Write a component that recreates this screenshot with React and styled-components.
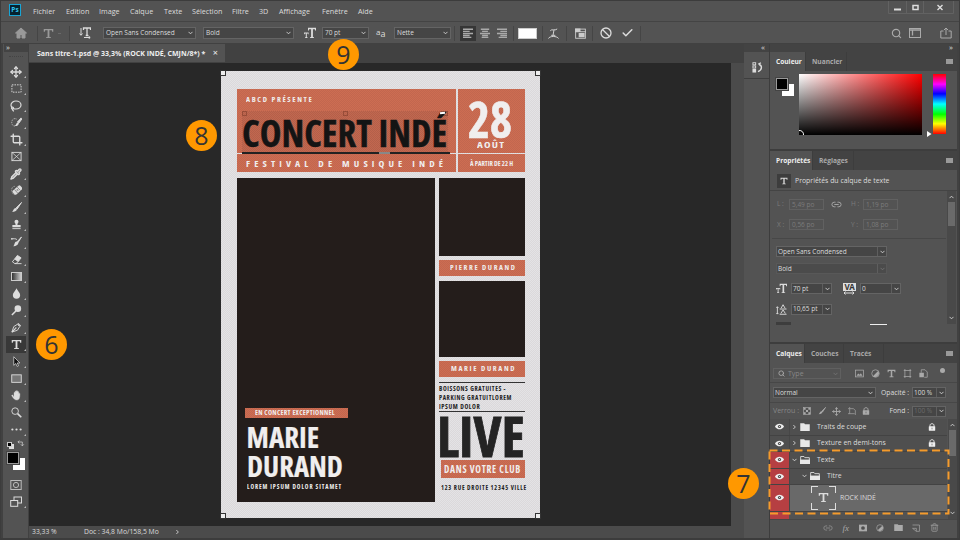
import React, { useLayoutEffect, useRef, useState } from 'react';
import styled, { createGlobalStyle } from 'styled-components';
import { Pipette, Move, Lasso, Crop, Search, Link2, Ban, Check, Trash2 } from 'lucide-react';

const tools = [
    'move', 'marquee', 'lasso', 'quick', 'crop', 'frame', 'pipette', 'heal', 'brush', 'stamp', 'history',
    'eraser', 'gradient', 'drop', 'dodge', 'pen', 'type', 'arrow', 'rect', 'hand', 'zoom', 'dots',
];

const menus = ['Fichier', 'Edition', 'Image', 'Calque', 'Texte', 'Sélection', 'Filtre', '3D', 'Affichage', 'Fenêtre', 'Aide'];
const menuWidths = [33, 33, 31, 34, 28, 40, 27, 20, 43, 36, 30];

const glyphs = {
    home: <path d="M6 1 0.5 6H2v5h3V7.500h2V11h3V6h1.500z" fill="currentColor" />,
    marquee: <rect x="1" y="2" width="10" height="8" strokeDasharray="1.700 1.100" />,
    quick: <><path d="M6 2.200C3 .8.8 3 .8 6s2.200 4.500 4.500 3.500" strokeDasharray="1 .8" strokeWidth=".8" /><path d="m11 1-4 4.500 1.500 1.300L12 2z" fill="currentColor" /><path d="M7.300 6 8.500 7C8 9.500 6.500 10 4 9.800 6 8.500 5.500 6.300 7.300 6z" fill="currentColor" stroke="none" /></>,
    frame: <><rect x="1" y="1.500" width="10" height="9" /><path d="m1 1.500 10 9m0-9-10 9" strokeWidth=".8" /></>,
    heal: <><g transform="rotate(-42 7 5.500)"><rect x="1.500" y="2.700" width="11" height="5.600" rx="1.500" fill="currentColor" stroke="none" /><path d="M5 3v5M9 3v5M6.500 4.500v2M7.500 4.500v2" stroke="#555" strokeWidth=".6" /></g><path d="M4 1.500C1.500 1.500.5 4 .8 6s1.200 4 3.200 4.500" strokeDasharray="1 .8" strokeWidth=".7" /></>,
    brush: <><path d="m11.500.5-6 6 1.200 1.200z" fill="currentColor" strokeWidth="1" /><path d="M5 6.500 6.500 8C6 10 4 11 1 11c1.500-.8 1.500-4 4-4.500z" fill="currentColor" stroke="none" /></>,
    stamp: <><path d="M3.800 3a2.200 2.200 0 1 1 4.400 0c0 1.300-1.200 1.500-1.200 3.500h3.500V9h-9V6.500H5C5 4.500 3.800 4.300 3.800 3z" fill="currentColor" stroke="none" /><path d="M1.500 10.500h9" /></>,
    history: <><path d="m11.500 1-5 5.500 1 1z" fill="currentColor" strokeWidth="1" /><path d="M6 6 8 8C7.500 10 5 11.500 2.500 11.200 4 10.200 3.500 6.500 6 6z" fill="currentColor" stroke="none" /><path d="M0 3h4M1 2.200v2M4 3c1 0 2 .3 2.500 1" /></>,
    eraser: <><path d="m7 1.500 4 2.700-3 4-4-2.700z" fill="currentColor" /><path d="m4 5.500-2.500 3L4 10.300h1.500L8 8.200M4 10.500h7.500" /></>,
    drop: <path d="M6 .3C5 3 2 5 2 7.700a4 4 0 0 0 8 0C10 5 7 3 6 .3z" fill="currentColor" stroke="none" />,
    dodge: <><circle cx="7.500" cy="4" r="3.600" fill="currentColor" stroke="none" /><path d="M5.300 6.500 1 11" strokeWidth="1.700" /></>,
    pen: <><path d="M1 11 3 5l4-2.500L9.500 5 7 9z" /><path d="m1 11 4-4M7.500 1.500 10.500 4.500" strokeWidth="1.400" /><circle cx="5.300" cy="6.500" r=".8" fill="currentColor" stroke="none" /></>,
    type: <path d="M.8 1h10.400v3.200H10L9.600 2.500H7v7.200l1.700.4v.9H3.300v-.9L5 9.700V2.500H2.400L2 4.200H.8z" fill="currentColor" stroke="none" />,
    arrow: <path d="M3 .8v9.400l2.200-2 1.500 3.200 1.500-.7L6.800 7.600h2.900z" fill="#111" strokeWidth=".8" />,
    rect: <rect x=".8" y="2" width="10.400" height="8.200" fill="#777" />,
    hand: <path d="M3.300 7.800V3.200c0-.9 1.200-.9 1.200 0V1.800c0-.9 1.300-.9 1.300 0v-.5c0-.9 1.300-.9 1.300 0v.8c.2-.7 1.300-.6 1.300.3v1.400c.3-.6 1.400-.4 1.300.4C9.700 7 9.500 11 6.500 11 4 11 3 9.500.8 6.300c-.3-.8.8-1.200 1.300-.5z" fill="currentColor" stroke="currentColor" strokeWidth=".4" />,
    zoom: <><circle cx="4.500" cy="4.500" r="3.600" /><path d="m7.200 7.200 4 4" strokeWidth="1.800" /></>,
    dots: <g fill="currentColor" stroke="none"><circle cx="1.500" cy="6" r="1.200" /><circle cx="6" cy="6" r="1.200" /><circle cx="10.500" cy="6" r="1.200" /></g>,
    orient: <><path d="M2 1v7M.5 6.500 2 8.300l1.500-1.800M5 10.500h6M9.500 9l1.700 1.500-1.700 1.500" /><path d="M4.500 3V1h7v2M8 1v7.500M6.700 8.500h2.600" strokeWidth="1.300" /></>,
    size: <g fill="currentColor" stroke="none"><path d="M4 .8h8v2.800h-.9l-.2-1.400H8.900V10l1.100.3v.7H6v-.7l1.100-.3V2.200H5.100l-.2 1.400H4z" /><path d="M0 5.500h4.600v1.700H4l-.2-.8H2.800V10l.7.300v.7H1.100v-.7l.7-.3V6.400H.8l-.2.800H0z" /></g>,
    lead: <><path d="M1.500 3v8M.4 4.200 1.500 3l1.100 1.200M.4 9.800 1.500 11l1.100-1.200M4 5.500h7.500M4 11.200h7.500" /><path d="M5.500 4.800 7.700.8 10 4.800M5.300 10.300 7.700 6.500l2.500 3.800" /></>,
    left: <path d="M0 1.500h12M0 4h8M0 6.500h12M0 9h8M0 11.300h10" strokeWidth="1.700" />,
    center: <path d="M1 1.500h10M2.500 4h7M0 6.500h12M2.500 9h7M2 11.300h8" strokeWidth="1.700" />,
    right: <path d="M0 1.500h12M4 4h8M0 6.500h12M4 9h8M2 11.300h10" strokeWidth="1.700" />,
    warp: <><path d="M2.500 3C3 1 9 3 10 1M6.500 2.200 5.500 8M3.500 8h4.500" /><path d="M.5 11.500c1-3 9.500-3 11 0" /></>,
    panel: <><rect x=".7" y="1.200" width="10.600" height="10" /><path d="M0 .5h6v3h6v1H0zM4 5.500h6.500v4.700H4z" fill="currentColor" stroke="none" /></>,
    workspace: <><rect x=".5" y="1.500" width="11" height="9" /><path d="M3.500 3.500v5M.5 3h11" strokeWidth="1.300" /></>,
    share: <path d="M3.500 4H.8v7h10.400V4H8.500M6 8V1M4 3l2-2 2 2" />,
    historyPanel: <><rect x="1" y=".8" width="3" height="2.300" /><rect x="1" y="4.300" width="3" height="2.300" /><rect x=".5" y="7.500" width="4" height="4" fill="currentColor" stroke="none" /><path d="M6.500 10.500C11 9 11.500 4 8 2.500M9.700.8 7.500 2.200l1.800 2" strokeWidth="1.500" /></>,
    image: <><rect x=".8" y="1.500" width="10.400" height="9" /><path d="m2 9 2.300-3 2 1.500 1.500-2L10 9z" fill="currentColor" stroke="none" /></>,
    adjust: <><circle cx="6" cy="6" r="5" /><path d="M9.500 2.500a5 5 0 0 1-7 7z" fill="currentColor" stroke="none" /></>,
    shape: <path d="M2.500 0v12M9.500 0v12M1 2h10M1 10h10" />,
    smart: <><path d="M3 5V1h5l3 3v7H7" /><rect x=".5" y="5" width="6" height="6" fill="currentColor" stroke="none" /></>,
    pixels: <><rect x=".8" y=".8" width="10.400" height="10.400" /><path d="M1 1h3v3H1zM8 1h3v3H8zM4.500 4.500h3v3h-3zM1 8h3v3H1zM8 8h3v3H8z" fill="currentColor" stroke="none" /></>,
    artboard: <path d="M2.500 0v10M0 10h10M2.500 2.500H8l3 2.500v7M2 2.500H0" />,
    lock: <><path d="M3 5.500V3.500C3 .3 9 .3 9 3.500v2" strokeWidth="1.500" /><rect x="1.200" y="5" width="9.600" height="6.500" rx=".5" fill="currentColor" stroke="none" /><path d="M6 7v2.500" stroke="#555" /></>,
    folder: <path d="M.3 1.500H5l1 1.300h5.700v8H.3z" fill="currentColor" stroke="none" />,
    folderOpen: <><path d="M.8 10V1.800h4l1 1.400h5.400V10" /><path d="M0 5.500h12v5.300H0z" fill="currentColor" stroke="none" /></>,
    eye: <><path d="M0 6c2.500-5 9.500-5 12 0-2.500 5-9.500 5-12 0z" fill="currentColor" stroke="none" /><circle cx="6" cy="6" r="2.100" fill="#484848" stroke="none" /><circle cx="6" cy="6" r=".8" fill="currentColor" stroke="none" /></>,
    mask: <><rect x="0" y="1" width="12" height="10" fill="currentColor" stroke="none" /><circle cx="6" cy="6" r="2.800" fill="#4d4d4d" stroke="none" /></>,
    newLayer: <path d="M.8 1.500h10.400V11H6.500M6.500 11V6.500H.8z" />,
    swap: <path d="M1.500 3H8v5.500M3.500.8 1.300 3l2.200 2.200M5.800 6.500 8 8.800l2.200-2.300" />,
    quickMask: <><rect x=".8" y="1.500" width="10.400" height="9" /><circle cx="6" cy="6" r="2.600" /></>,
    screens: <><rect x="4" y="1" width="7.500" height="6" /><rect x=".7" y="4.500" width="7" height="5.800" fill="#535353" /></>,
};

const Icon = ({name, size = 12, color}) => (
    <Glyph viewBox="0 0 12 12" $size={size} $color={color}>{glyphs[name]}</Glyph>
);

// stretches one line of poster text to the width of its text frame
const FitText = ({width, h, size, pt, pl, ls, color, stroke, children}) => {
    const ref = useRef(null);
    const [scale, setScale] = useState(1);

    useLayoutEffect(() => {
        setScale(width / ref.current.offsetWidth);
    }, [width, children]);

    return (
        <FitLine $w={width} $h={h} $size={size} $pt={pt} $pl={pl} $ls={ls} $color={color} $stroke={stroke}>
            <span ref={ref} style={{transform: `scaleX(${scale})`}}>{children}</span>
        </FitLine>
    );
};

const ToolIcon = ({name}) => {
    switch (name) {
        case 'move': return <Move size={12} strokeWidth={2.600} />;
        case 'lasso': return <Lasso size={12} strokeWidth={2.400} />;
        case 'crop': return <Crop size={13} strokeWidth={2.500} />;
        case 'pipette': return <Pipette size={12} strokeWidth={2.600} fill="#999" />;
        case 'gradient': return <GradientTool />;
        default: return <Icon name={name} size={11} />;
    }
};

const Chevron = ({up, right, dim}) => (
    <ChevronSvg viewBox="0 0 6 4" $turn={up ? 180 : right ? -90 : 0} $dim={dim}><path d="m.6.600 2.400 2.400L5.400.600" /></ChevronSvg>
);

const Select = ({w, ml, h, dim, split, muted, children}) => (
    <SelectBox $w={w} $ml={ml} $h={h} $dim={dim} $muted={muted}>
        <span>{children}</span>
        <SelectArrow $split={split}><Chevron dim={dim} /></SelectArrow>
    </SelectBox>
);

const PanelTabs = ({items}) => (
    <Tabs>
        {items.map(([label, w], i) => <Tab key={label} $w={w} $active={i === 0}>{label}</Tab>)}
        <Burger />
    </Tabs>
);

const Layer = ({h = 16, color, indent = 0, open, selected, locked, children}) => (
    <LayerRow $h={h} $selected={selected}>
        <EyeCell $color={color}><Icon name="eye" size={9} color="#eee" /></EyeCell>
        <LayerBody $indent={indent}>
            {selected ? (
                <TypeThumb><Icon name="type" size={11} /></TypeThumb>
            ) : (
                <>
                    <Chevron right={!open} />
                    <Icon name={open ? 'folderOpen' : 'folder'} size={10} color="#e8e8e8" />
                </>
            )}
            <LayerName $ml={selected ? 2 : 7}>{children}</LayerName>
            {locked && <Icon name="lock" size={8} color="#eee" />}
        </LayerBody>
    </LayerRow>
);

const Poster = () => (
    <Sheet>
        <Corner $x="left" $y="top" />
        <Corner $x="right" $y="top" />
        <Corner $x="left" $y="bottom" />
        <Corner $x="right" $y="bottom" />
        <Banner>
            <TitleCell>
                <Selection>
                    <Handle /><Handle /><Handle />
                </Selection>
                <FitText width={68} size={6.500} h={9} pt={6} pl={9} ls={1.400}>ABCD PRÉSENTE</FitText>
                <FitText width={205} size={37.500} h={41} pt={8} pl={5} color="#141414" stroke={.4}>CONCERT INDÉ</FitText>
                <Caret />
                <Underline />
            </TitleCell>
            <Cell>
                <FitText width={44} size={50} h={42} pt={9} pl={10.500} stroke={.6}>28</FitText>
                <FitText width={28} size={9.500} h={10} pl={19} ls={1}>AOÛT</FitText>
            </Cell>
            <Cell>
                <FitText width={201} size={9.500} h={17} pt={.5} pl={9} ls={4}>FESTIVAL DE MUSIQUE INDÉ</FitText>
            </Cell>
            <Cell>
                <FitText width={43} size={6.500} h={17} pt={.5} pl={12}>À PARTIR DE 22 H</FitText>
            </Cell>
        </Banner>
        <PosterBody>
            <MainPhoto>
                <Ribbon>
                    <FitText width={80} size={6.500} h={10} pl={10} ls={.3}>EN CONCERT EXCEPTIONNEL</FitText>
                </Ribbon>
                <FitText width={73} size={29} h={29} pt={4.500} pl={2} stroke={.2}>MARIE</FitText>
                <FitText width={96} size={29} h={30} pl={2} stroke={.2}>DURAND</FitText>
                <FitText width={95} size={6.500} h={12} pl={2.500} ls={1}>LOREM IPSUM DOLOR SITAMET</FitText>
            </MainPhoto>
            <SideColumn>
                <Photo $h={78.500} />
                <Label><FitText width={67} size={7} h={16} pl={10.500} ls={1.500}>PIERRE DURAND</FitText></Label>
                <Photo $h={76} />
                <Label><FitText width={65} size={7} h={16} pl={11.500} ls={1.500}>MARIE DURAND</FitText></Label>
                <Notes>
                    <FitText width={67} size={6.300} h={9} color="#222" ls={.6}>BOISSONS GRATUITES -</FitText>
                    <FitText width={73} size={6.300} h={9} color="#222" ls={.6}>PARKING GRATUITLOREM</FitText>
                    <FitText width={41} size={6.300} h={9} color="#222" ls={.6}>IPSUM DOLOR</FitText>
                </Notes>
                <FitText width={88} size={55} h={48.500} color="#242424" pl={-2} stroke={.8}>LIVE</FitText>
                <ClubLabel><FitText width={77} size={10.500} h={18} pl={2.500} ls={.8}>DANS VOTRE CLUB</FitText></ClubLabel>
                <FitText width={86} size={6.500} h={18} pt={.5} pl={2} color="#222" ls={.8}>123 RUE DROITE 12345 VILLE</FitText>
            </SideColumn>
        </PosterBody>
    </Sheet>
);

const App = () => (
    <Window>
        <GlobalStyle />
        <MenuBar>
            <Logo>Ps</Logo>
            {menus.map((m, i) => <MenuItem key={m} $w={menuWidths[i]}>{m}</MenuItem>)}
            <WindowButtons>
                <svg viewBox="0 0 66 13">
                    <path d="M.5 0v12.500h65V0M18.500 0v12.500M35.500 0v12.500" stroke="#626262" fill="none" />
                    <path d="M6 8.500h7" stroke="#ddd" strokeWidth="2" />
                    <rect x="25" y="4.500" width="5" height="4" stroke="#ddd" strokeWidth="1.500" fill="none" />
                    <path d="m49.500 4 5 5m0-5-5 5" stroke="#ddd" strokeWidth="1.400" />
                </svg>
            </WindowButtons>
        </MenuBar>
        <OptionsBar>
            <Slot $w={12} $ml={14}><Icon name="home" size={12} color="#999" /></Slot>
            <Sep $ml={10} />
            <Slot $w={10} $ml={5}><Icon name="type" size={11} color="#999" /></Slot>
            <Tick />
            <Sep $ml={8} />
            <Slot $w={12} $ml={9}><Icon name="orient" size={12} /></Slot>
            <Select w={93} ml={12}>Open Sans Condensed</Select>
            <Select w={91} ml={7}>Bold</Select>
            <Slot $w={12} $ml={10}><Icon name="size" size={12} /></Slot>
            <Select w={47} ml={6}>70 pt</Select>
            <AntiAlias>a<span>a</span></AntiAlias>
            <Select w={57} ml={6} pl={3}>Nette</Select>
            <Sep $ml={3} />
            <AlignButton $active><Icon name="left" size={10} color="#aaa" /></AlignButton>
            <AlignButton><Icon name="center" size={10} color="#aaa" /></AlignButton>
            <AlignButton><Icon name="right" size={10} color="#aaa" /></AlignButton>
            <Sep $ml={3} />
            <ColorBox />
            <Sep $ml={5} />
            <Slot $w={12} $ml={4}><Icon name="warp" size={11} /></Slot>
            <Sep $ml={7} />
            <Slot $w={12} $ml={7}><Icon name="panel" size={11} color="#ccc" /></Slot>
            <Sep $ml={6} />
            <Slot $w={12} $ml={7}><Ban size={12} strokeWidth={2.600} /></Slot>
            <Slot $w={13} $ml={9}><Check size={14} strokeWidth={2.800} /></Slot>
            <Sep $ml={6} />
            <RightTools>
                <Search size={11} strokeWidth={2.500} />
                <Icon name="workspace" size={12} />
                <Icon name="share" size={12} />
            </RightTools>
        </OptionsBar>
        <Workspace>
            <ToolColumn>
                <Collapse>»</Collapse>
                <Grip />
                {tools.map(t => <Tool key={t} $active={t === 'type'} $corner={t !== 'frame' && t !== 'zoom'}><ToolIcon name={t} /></Tool>)}
                <MiniRow>
                    <MiniSwatch />
                    <Icon name="swap" size={8} />
                </MiniRow>
                <Swatches><i /><b /></Swatches>
                <Tool $mt={6}><Icon name="quickMask" size={12} color="#bbb" /></Tool>
                <Tool $corner><Icon name="screens" size={12} /></Tool>
            </ToolColumn>
            <Document>
                <DocTabs>
                    <DocTab>Sans titre-1.psd @ 33,3% (ROCK INDÉ, CMJN/8*) *<em>×</em></DocTab>
                </DocTabs>
                <Viewport>
                    <Canvas><Poster /></Canvas>
                    <VScroll />
                </Viewport>
                <Status>
                    <Zoom>33,33 %</Zoom>
                    <span>Doc : 34,8 Mo/158,5 Mo</span>
                    <Chevron right />
                </Status>
            </Document>
            <Dock>
                <DockHead>«</DockHead>
                <DockButton><Icon name="historyPanel" size={11} /></DockButton>
            </Dock>
            <Panels>
                <DockHead>»</DockHead>
                <PanelTabs items={[['Couleur', 36], ['Nuancier', 41]]} />
                <ColorBody>
                    <Swatches><i /><b /></Swatches>
                    <Spectrum><svg viewBox="0 0 5 5"><path d="M0 .5A4 4 0 0 1 4.500 5" fill="none" stroke="#fff" /></svg></Spectrum>
                    <HueArrow viewBox="0 0 5 6"><path d="M0 0v6l4.500-3z" fill="#fff" /></HueArrow>
                    <Hue />
                </ColorBody>
                <PanelTabs items={[['Propriétés', 43], ['Réglages', 41]]} />
                <PropHead>
                    <PropIcon><Icon name="type" size={8} /></PropIcon>
                    Propriétés du calque de texte
                </PropHead>
                <PropBody>
                    <PropFields>
                        <DimRow>
                            <label>L :</label><DimField>5,49 po</DimField><Link2 size={11} strokeWidth={2} color="#aaa" /><label>H :</label><DimField>1,19 po</DimField>
                        </DimRow>
                        <DimRow>
                            <label>X :</label><DimField>0,56 po</DimField><i /><label>Y :</label><DimField>1,08 po</DimField>
                        </DimRow>
                        <Rule />
                        <FieldRow $h={17}><Select w={111} h={11} split>Open Sans Condensed</Select></FieldRow>
                        <FieldRow $h={17}><Select w={111} h={11} split dim>Bold</Select></FieldRow>
                        <FieldRow $h={21} $mt={1}>
                            <Icon name="size" size={11} />
                            <Select w={41} ml={4} h={11} split>70 pt</Select>
                            <Tracking><b>VA</b><svg viewBox="0 0 12 4"><path d="M1 2h10M2.500.5 1 2l1.500 1.500M9.500.5 11 2 9.500 3.500" /></svg></Tracking>
                            <Select w={41} ml={4} h={11} split>0</Select>
                        </FieldRow>
                        <FieldRow $h={20}>
                            <Icon name="lead" size={11} />
                            <Select w={41} ml={4} h={11} split>10,65 pt</Select>
                        </FieldRow>
                        <CutRow><i /><b /></CutRow>
                    </PropFields>
                    <ScrollTrack $h={133}>
                        <Chevron up />
                        <Thumb $h={24} />
                        <Chevron />
                    </ScrollTrack>
                </PropBody>
                <PanelTabs items={[['Calques', 35], ['Couches', 39], ['Tracés', 40]]} />
                <LayerBar $h={20} $pt={2}>
                    <FilterBox><Search size={7} strokeWidth={3} color="#aaa" />Type<Chevron dim /></FilterBox>
                    <FilterIcons>
                        {['image', 'adjust', 'type', 'shape', 'smart'].map(n => <Icon key={n} name={n} size={9} color="#aaa" />)}
                    </FilterIcons>
                    <FilterDot />
                </LayerBar>
                <LayerBar $h={20}>
                    <Select w={103} h={11}>Normal</Select>
                    <BarLabel>Opacité :</BarLabel>
                    <Select w={34} h={11} ml={3} split>100 %</Select>
                </LayerBar>
                <LayerBar $h={16} $plain>
                    <Lockup>Verrou :</Lockup>
                    <LockIcons>
                        {['pixels', 'brush', 'move', 'artboard', 'lock'].map(n => n === 'move'
                            ? <Move key={n} size={9} strokeWidth={2.400} color="#aaa" />
                            : <Icon key={n} name={n} size={8} color="#aaa" />)}
                    </LockIcons>
                    <BarLabel>Fond :</BarLabel>
                    <Select w={34} h={11} ml={3} split muted>100 %</Select>
                </LayerBar>
                <LayerArea>
                    <LayerList>
                        <Layer locked>Traits de coupe</Layer>
                        <Layer locked>Texture en demi-tons</Layer>
                        <Layer color="#b63f42" open>Texte</Layer>
                        <Layer color="#b63f42" open indent={10}>Titre</Layer>
                        <Layer color="#b63f42" selected indent={19} h={26}>ROCK INDÉ</Layer>
                        <Stub />
                    </LayerList>
                    <ScrollTrack $h={100}>
                        <Chevron up />
                        <Thumb $h={26} />
                        <Chevron />
                    </ScrollTrack>
                </LayerArea>
                <LayerFooter>
                    <Link2 size={10} strokeWidth={2.300} color="#888" />
                    <em>fx</em>
                    <Icon name="mask" size={8} />
                    <Icon name="adjust" size={8} />
                    <Icon name="folder" size={9} />
                    <Icon name="newLayer" size={8} />
                    <Trash2 size={9} strokeWidth={2.300} color="#999" />
                </LayerFooter>
            </Panels>
        </Workspace>
        <Dashes viewBox="0 0 182 66"><rect x="1.500" y="1.500" width="179" height="63" /></Dashes>
        <Step $x={36} $y={329}>6</Step>
        <Step $x={728} $y={468}>7</Step>
        <Step $x={186} $y={120}>8</Step>
        <Step $x={328} $y={39}>9</Step>
    </Window>
);

const GlobalStyle = createGlobalStyle`
* { box-sizing: border-box; }
body { margin: 0; background: #535353; }
`

const Window = styled.div`
position: relative;
width: 960px;
height: 540px;
overflow: hidden;
background: #535353;
border: 1px solid #3c3c3c;
border-width: 1px 1px 2px 1px;
color: #dcdcdc;
font-family: "Open Sans", "Noto Sans", sans-serif;
font-size: 7px;
line-height: 10px;
white-space: nowrap;
display: flex;
flex-direction: column;
`

const Glyph = styled.svg`
width: ${p => p.$size}px;
height: ${p => p.$size}px;
color: ${p => p.$color || 'inherit'};
fill: none;
stroke: currentColor;
flex: none;
`

const ChevronSvg = styled.svg`
width: 5px;
height: 4px;
flex: none;
fill: none;
stroke: ${p => p.$dim ? '#777' : '#ddd'};
transform: rotate(${p => p.$turn}deg);
`

const MenuBar = styled.header`
height: 21px;
flex: none;
display: flex;
align-items: center;
border-bottom: 1px solid #444;
`

const Logo = styled.div`
width: 12px;
height: 12px;
margin: 0 12px 3px 8px;
background: #06222f;
border: 1px solid #18a5d6;
color: #31c5f0;
font: bold 6.500px/9px "Open Sans", sans-serif;
text-align: center;
`

const MenuItem = styled.span`
width: ${p => p.$w}px;
font-size: 7.200px;
`

const WindowButtons = styled.div`
margin-left: auto;
margin-right: 5px;
width: 66px;
height: 13px;
align-self: flex-start;
svg { display: block; width: 66px; height: 13px; }
`

const OptionsBar = styled.div`
height: 22px;
flex: none;
display: flex;
align-items: center;
border-bottom: 1px solid #414141;
padding-top: 1px;
`

const Slot = styled.div`
width: ${p => p.$w}px;
margin-left: ${p => p.$ml}px;
flex: none;
display: flex;
justify-content: center;
`

const Tick = styled.i`
width: 3px;
height: 1px;
margin-left: 5px;
background: #6a6a6a;
`

const Sep = styled.i`
width: 1px;
height: 15px;
flex: none;
background: #454545;
margin-left: ${p => p.$ml}px;
`

const SelectBox = styled.div`
width: ${p => p.$w}px;
height: ${p => p.$h || 12}px;
margin-left: ${p => p.$ml || 0}px;
flex: none;
display: flex;
align-items: center;
background: ${p => p.$dim ? '#4b4b4b' : '#454545'};
border: 1px solid ${p => p.$dim ? '#585858' : '#646464'};
color: ${p => p.$muted ? '#6c6c6c' : '#dcdcdc'};
font-size: 6.500px;
padding-left: ${p => p.$h ? 1 : 2}px;
`

const SelectArrow = styled.div`
margin-left: auto;
width: 9px;
height: 100%;
display: flex;
align-items: center;
justify-content: center;
border-left: ${p => p.$split ? '1px solid #5e5e5e' : '0'};
`

const AntiAlias = styled.div`
width: 12px;
margin: -3px 0 0 7px;
font-size: 8px;
line-height: 8px;
span { position: relative; top: 2px; font-size: 9px; }
`

const AlignButton = styled.div`
width: 16px;
height: 15px;
margin-left: ${p => p.$active ? 5 : 1}px;
display: flex;
align-items: center;
justify-content: center;
background: ${p => p.$active ? '#363636' : 'transparent'};
`

const ColorBox = styled.div`
width: 19px;
height: 11px;
margin-left: 4px;
background: #fff;
border: 1px solid #ccc;
`

const RightTools = styled.div`
margin-left: auto;
margin-right: 7px;
display: flex;
align-items: center;
gap: 7px;
color: #aaa;
svg:last-child { margin-left: 12px; }
`

const Workspace = styled.div`
flex: 1;
min-height: 0;
display: flex;
background: #414141;
`

const ToolColumn = styled.aside`
width: 25px;
flex: none;
margin-left: 2px;
padding-left: 1px;
background: #535353;
display: flex;
flex-direction: column;
align-items: center;
`

const Collapse = styled.div`
align-self: stretch;
height: 8px;
background: #434343;
padding-left: 2px;
font-size: 8px;
line-height: 6px;
`

const Grip = styled.div`
width: 14px;
height: 3px;
margin: 2px 0 6px;
border-bottom: 1px dotted #444;
`

const Tool = styled.div`
position: relative;
width: 20px;
height: 17.050px;
flex: none;
margin-top: ${p => p.$mt || 0}px;
display: flex;
align-items: center;
justify-content: center;
background: ${p => p.$active ? '#383838' : 'transparent'};
&::after {
    content: "";
    position: absolute;
    right: 0;
    bottom: 2px;
    border: ${p => p.$corner ? '1px solid #bbb' : '0'};
    border-left-color: transparent;
    border-top-color: transparent;
}
`

const GradientTool = styled.div`
width: 11px;
height: 9px;
border: 1px solid #ccc;
background: linear-gradient(90deg, #333, #ccc);
`

const MiniRow = styled.div`
display: flex;
gap: 5px;
height: 8px;
margin-top: 2px;
align-items: center;
`

const MiniSwatch = styled.div`
width: 5px;
height: 5px;
background: #000;
border: 1px solid #ccc;
box-shadow: 2px 2px 0 #ddd;
`

const Swatches = styled.div`
display: grid;
width: 18px;
height: 18px;
margin-top: 4px;
i, b { grid-area: 1 / 1; width: 12px; height: 12px; }
i { background: #000; border: 1px solid #999; outline: 1px solid #444; z-index: 1; }
b { background: #fff; place-self: end; }
`

const Document = styled.main`
width: 715px;
flex: none;
margin-left: 1px;
display: flex;
flex-direction: column;
`

const DocTabs = styled.div`
height: 19px;
flex: none;
`

const DocTab = styled.div`
width: 196px;
height: 18px;
padding: 5px 0 0 8px;
background: #535353;
color: #eee;
font-weight: 700;
font-size: 7px;
em { float: right; margin-right: 7px; font-style: normal; font-weight: 400; font-size: 9px; line-height: 8px; }
`

const Viewport = styled.div`
flex: 1;
min-height: 0;
display: flex;
`

const Canvas = styled.div`
width: 702px;
background: #282828;
padding: 7.500px 0 0 192px;
overflow: hidden;
`

const VScroll = styled.div`
flex: 1;
background: #4b4b4b;
`

const Status = styled.footer`
height: 12px;
flex: none;
display: flex;
align-items: center;
background: #4b4b4b;
font-size: 6.800px;
span { width: 91px; }
`

const Zoom = styled.div`
width: 55px;
padding-left: 3px;
`

const Dock = styled.aside`
width: 26px;
flex: none;
background: #535353;
border-right: 1px solid #3d3d3d;
`

const DockHead = styled.div`
height: 8px;
flex: none;
background: #434343;
padding-right: 4px;
text-align: right;
font-size: 8px;
line-height: 6px;
`

const DockButton = styled.div`
height: 27px;
display: flex;
align-items: center;
justify-content: center;
padding: 4px 0 0 1px;
border-bottom: 1px solid #3e3e3e;
`

const Panels = styled.aside`
width: 187px;
flex: none;
background: #535353;
display: flex;
flex-direction: column;
`

const Tabs = styled.div`
height: 19px;
flex: none;
display: flex;
background: #434343;
`

const Tab = styled.div`
width: ${p => p.$w}px;
padding: 4.500px 0 0 6px;
font-weight: 700;
font-size: 6.600px;
background: ${p => p.$active ? '#535353' : 'transparent'};
color: ${p => p.$active ? '#eee' : '#aaa'};
border-right: 1px solid #3d3d3d;
`

const Burger = styled.i`
width: 7px;
height: 5px;
margin: 7px 4px 0 auto;
background: #999;
`

const ColorBody = styled.div`
height: 80px;
flex: none;
display: flex;
padding: 3px 0 0 6px;
border-bottom: 2px solid #3d3d3d;
`

const Spectrum = styled.div`
width: 123px;
height: 61px;
margin-left: 5px;
background: linear-gradient(0deg, #000, transparent), linear-gradient(90deg, #fff, #f00);
display: flex;
align-items: flex-end;
svg { width: 5px; height: 5px; }
`

const HueArrow = styled.svg`
width: 5px;
height: 6px;
margin: 57px 1px 0 5px;
`

const Hue = styled.div`
width: 13px;
height: 60px;
background: linear-gradient(#f00, #f0f 17%, #00f 33%, #0ff 50%, #0f0 67%, #ff0 83%, #f00);
`

const PropHead = styled.div`
height: 21px;
flex: none;
display: flex;
align-items: center;
padding: 1px 0 0 7px;
border-bottom: 1px solid #444;
font-size: 6.900px;
`

const PropIcon = styled.div`
width: 14px;
height: 14px;
margin-right: 4px;
background: #3d3d3d;
display: flex;
align-items: center;
justify-content: center;
`

const PropBody = styled.div`
height: 153px;
flex: none;
display: flex;
border-bottom: 2px solid #3d3d3d;
`

const PropFields = styled.div`
width: 176px;
padding: 3px 0 0 6px;
`

const DimRow = styled.div`
height: 20.500px;
display: flex;
align-items: center;
color: #7c7c7c;
font-size: 6.500px;
label { width: 13px; padding-left: 1px; }
> svg, > i { width: 11px; margin: 0 8px 0 7px; }
`

const DimField = styled.div`
width: 35px;
height: 11px;
padding-left: 2px;
border: 1px solid #616161;
line-height: 9px;
`

const Rule = styled.div`
height: 1px;
margin: 3px 0 4px -4px;
background: #474747;
`

const FieldRow = styled.div`
height: ${p => p.$h}px;
margin-top: ${p => p.$mt || 0}px;
display: flex;
align-items: center;
`

const Tracking = styled.div`
width: 13px;
margin-left: 11px;
b { display: block; height: 8px; background: #ddd; color: #333; font-size: 8px; line-height: 8px; text-align: center; letter-spacing: -.3px; }
svg { display: block; width: 12px; height: 4px; stroke: #ddd; fill: none; }
`

const CutRow = styled.div`
display: flex;
margin-top: 3px;
i { width: 15px; height: 3px; background: #3d3d3d; }
b { width: 17px; height: 1px; margin: 2px 0 0 79px; background: #eee; }
`

const ScrollTrack = styled.div`
width: 9px;
height: ${p => p.$h}px;
margin-left: 1px;
background: #494949;
display: flex;
flex-direction: column;
align-items: center;
padding: 4px 0;
> svg:last-child { margin-top: auto; }
`

const Thumb = styled.div`
width: 7px;
height: ${p => p.$h}px;
margin-top: 3px;
background: #6a6a6a;
`

const LayerBar = styled.div`
height: ${p => p.$h}px;
flex: none;
display: flex;
align-items: center;
padding: ${p => p.$pt || 0}px 0 0 3px;
border-bottom: ${p => p.$plain ? '0' : '1px solid #474747'};
`

const FilterBox = styled.div`
width: 68px;
height: 11px;
padding: 0 2px 0 4px;
display: flex;
align-items: center;
gap: 3px;
border: 1px solid #606060;
color: #888;
> svg:last-child { margin-left: auto; }
`

const FilterIcons = styled.div`
width: 73px;
margin-left: 14px;
display: flex;
justify-content: space-between;
`

const FilterDot = styled.i`
width: 5px;
height: 5px;
margin: 0 0 6px 12px;
border-radius: 50%;
background: #aaa;
`

const BarLabel = styled.span`
width: 33px;
text-align: right;
font-size: 6.800px;
`

const Lockup = styled.span`
width: 30px;
color: #888;
`

const LockIcons = styled.div`
width: 67px;
margin-right: 6px;
display: flex;
justify-content: space-between;
align-items: center;
`

const LayerArea = styled.div`
height: 100px;
flex: none;
display: flex;
`

const LayerList = styled.div`
width: 177px;
overflow: hidden;
`

const LayerRow = styled.div`
height: ${p => p.$h + .500}px;
display: flex;
background: ${p => p.$selected ? '#696969' : '#4f4f4f'};
border-bottom: 1px solid #434343;
`

const EyeCell = styled.div`
width: 20px;
background: ${p => p.$color || 'transparent'};
border-right: 1px solid #474747;
display: flex;
align-items: center;
justify-content: center;
`

const LayerBody = styled.div`
flex: 1;
display: flex;
align-items: center;
gap: 3px;
padding: 0 11px 0 ${p => p.$indent + 2}px;
`

const LayerName = styled.span`
flex: 1;
margin-left: ${p => p.$ml - 3}px;
font-size: 6.900px;
`

const TypeThumb = styled.div`
width: 25px;
height: 24px;
margin-right: 2px;
flex: none;
display: flex;
align-items: center;
justify-content: center;
--c: linear-gradient(#ddd, #ddd);
background:
    var(--c) 0 0 / 7px 1px, var(--c) 0 0 / 1px 7px,
    var(--c) 100% 0 / 7px 1px, var(--c) 100% 0 / 1px 7px,
    var(--c) 0 100% / 7px 1px, var(--c) 0 100% / 1px 7px,
    var(--c) 100% 100% / 7px 1px, var(--c) 100% 100% / 1px 7px;
background-repeat: no-repeat;
`

const Stub = styled.div`
width: 19px;
height: 8px;
background: #b63f42;
`

const LayerFooter = styled.div`
flex: 1;
display: flex;
align-items: center;
justify-content: space-between;
padding: 0 18px 3px 53px;
border-top: 1px solid #474747;
color: #aaa;
em { font-family: "Liberation Serif", serif; font-size: 9px; }
`

/* poster */

const dots = a => `repeating-conic-gradient(rgba(60, 40, 40, ${a}) 0 25%, transparent 0 50%) 0 0 / 2px 2px`;

const Sheet = styled.article`
position: relative;
width: 319px;
height: 447px;
padding: 18px 15px 0 16px;
background: ${dots(.06)}, #e4e3e5;
`

const Corner = styled.i`
position: absolute;
${p => p.$x}: -1px;
${p => p.$y}: -1px;
width: 6px;
height: 6px;
background: #eee;
border: 1px solid #333;
`

const FitLine = styled.div`
position: relative;
height: ${p => p.$h}px;
margin-top: ${p => p.$pt || 0}px;
margin-left: ${p => p.$pl || 0}px;
width: ${p => p.$w}px;
line-height: ${p => p.$h}px;
font-size: ${p => p.$size}px;
font-weight: 700;
font-stretch: 75%;
letter-spacing: ${p => p.$ls || 0}px;
color: ${p => p.$color || '#f0eeee'};
-webkit-text-stroke: ${p => p.$stroke || 0}px currentColor;
span { display: inline-block; transform-origin: left; }
`

const Banner = styled.section`
display: grid;
grid-template-columns: 219px 67.500px;
grid-template-rows: 64px 18px;
gap: 1.500px;
`

const Cell = styled.div`
background: ${dots(.08)}, #cd6d52;
`

const TitleCell = styled(Cell)`
position: relative;
`

const Selection = styled.div`
position: absolute;
left: 5px;
top: 22px;
width: 206px;
height: 42px;
display: flex;
justify-content: space-between;
background: ${dots(.18)};
`

const Handle = styled.i`
width: 5px;
height: 5px;
border: 1px solid rgba(90, 35, 20, .35);
`

const Caret = styled.i`
position: absolute;
right: 11px;
top: 23px;
width: 5px;
height: 2px;
background: #fff;
transform: rotate(-8deg);
`

const Underline = styled.i`
position: absolute;
left: 5px;
bottom: -1px;
width: 208px;
height: 2px;
z-index: 1;
background: linear-gradient(90deg, #222 66%, #888 66%, #888 71%, #222 71%);
`

const PosterBody = styled.section`
display: grid;
grid-template-columns: 197.500px 86px;
column-gap: 4.500px;
margin-top: 5.500px;
`

const MainPhoto = styled.div`
height: 324px;
padding: 230px 0 0 7.500px;
background: #241d1b;
`

const Ribbon = styled.div`
width: 103.500px;
height: 10px;
background: ${dots(.08)}, #cd6d52;
`

const SideColumn = styled.div`
display: flex;
flex-direction: column;
`

const Photo = styled.div`
height: ${p => p.$h}px;
background: #241d1b;
`

const Label = styled.div`
height: 16px;
margin: 4.300px 0;
background: ${dots(.08)}, #cd6d52;
`

const Notes = styled.div`
height: 30px;
margin-top: .800px;
padding-top: 1px;
border-top: 1px solid #333;
border-bottom: 1px solid #333;
`

const ClubLabel = styled.div`
height: 18px;
margin-left: 2px;
background: ${dots(.08)}, #cd6d52;
`

/* tutorial marks */

const Dashes = styled.svg`
position: absolute;
left: 767px;
top: 447.500px;
width: 182px;
height: 66px;
fill: none;
stroke: #f59b2c;
stroke-width: 2;
stroke-dasharray: 8 4.500;
`

const Step = styled.div`
position: absolute;
left: ${p => p.$x - 1}px;
top: ${p => p.$y - 1}px;
width: 31px;
height: 31px;
border-radius: 50%;
background: #ff9800;
color: #333;
font-size: 25px;
line-height: 31px;
text-align: center;
`

export default App;
